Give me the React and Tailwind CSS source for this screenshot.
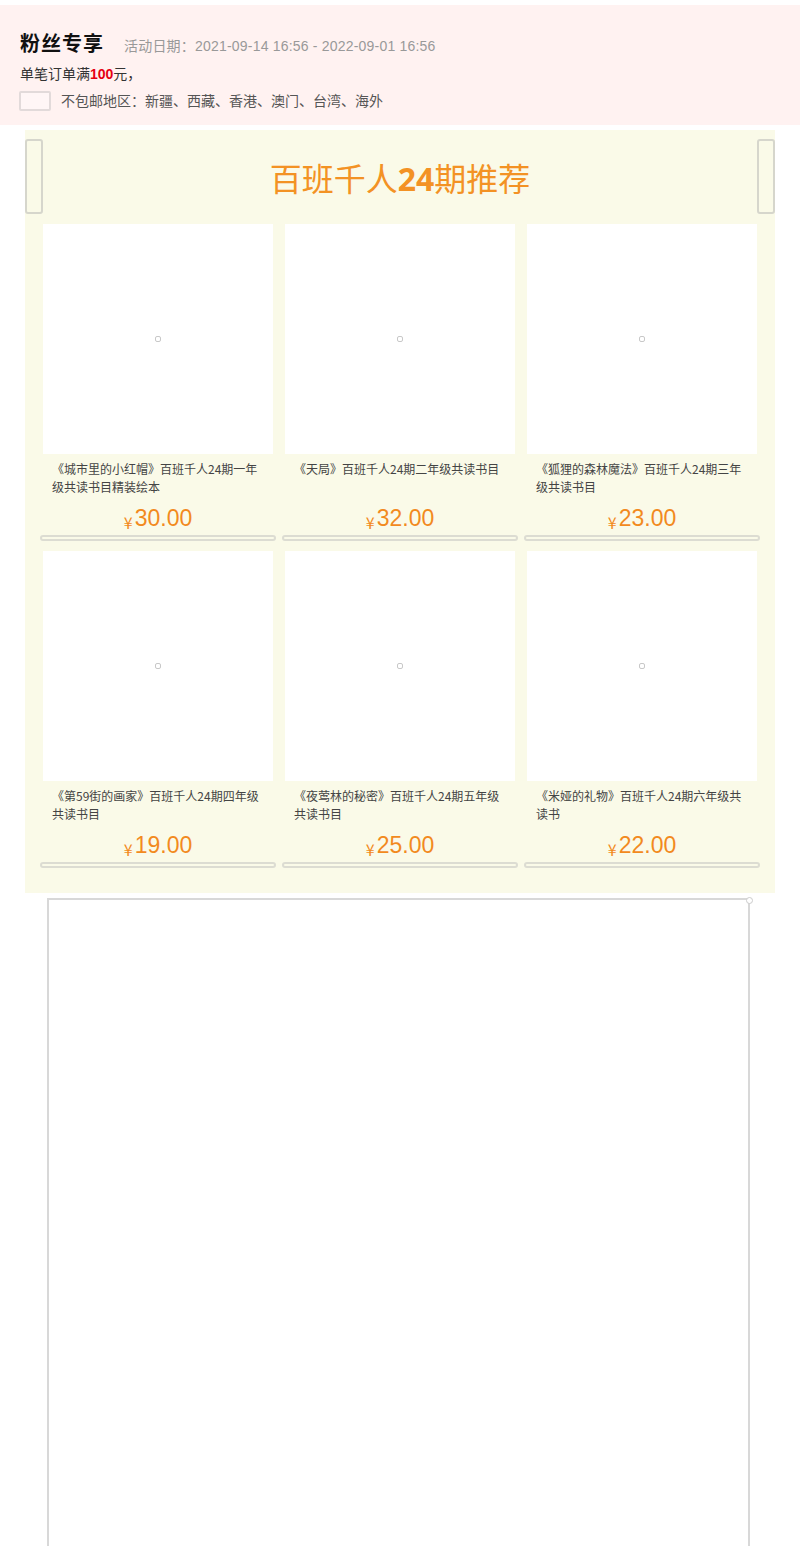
import React from "react";

const products = [
  { t: "《城市里的小红帽》百班千人24期一年级共读书目精装绘本", p: "30.00" },
  { t: "《天局》百班千人24期二年级共读书目", p: "32.00" },
  { t: "《狐狸的森林魔法》百班千人24期三年级共读书目", p: "23.00" },
  { t: "《第59街的画家》百班千人24期四年级共读书目", p: "19.00" },
  { t: "《夜莺林的秘密》百班千人24期五年级共读书目", p: "25.00" },
  { t: "《米娅的礼物》百班千人24期六年级共读书", p: "22.00" },
];

const font = { fontFamily: '"Noto Sans CJK SC", "Liberation Sans", sans-serif' };

function Card({ t, p }) {
  return (
    <div className="flex flex-col">
      <div className="w-[230px] h-[230px] bg-white flex items-center justify-center">
        <div className="w-[6px] h-[6px] rounded-[2px] border border-[#c8c8c8]" />
      </div>
      <div className="px-[9px] mt-[6px] h-[36px] text-[12px] leading-[18px] text-[#444]">{t}</div>
      <div className="h-[36px] flex items-end justify-center text-[#f28a1e] leading-none pb-[2px]">
        <span className="text-[16px] mr-[2px]">¥</span>
        <span className="text-[23px]" style={{ fontFamily: '"Liberation Sans", sans-serif' }}>{p}</span>
      </div>
      <div className="mx-[-3px] mt-[3px] h-[6px] rounded-[3px] border-2 border-[#dcdcd2]" />
    </div>
  );
}

export default function App() {
  return (
    <div className="w-[800px] bg-white pt-[5px]" style={font}>
      <div className="h-[120px] bg-[#fff2f1] pl-[20px] pt-[24px]">
        <div className="flex items-baseline">
          <span
            className="text-[20px] font-bold text-[#111] tracking-[1px]"
            style={{ fontFamily: '"Liberation Serif", "Noto Sans CJK SC", serif' }}
          >
            粉丝专享
          </span>
          <span
            className="ml-[20px] text-[14px] text-[#999] tracking-[0.2px]"
            style={{ fontFamily: '"Liberation Sans", "Noto Sans CJK SC", sans-serif' }}
          >
            活动日期：2021-09-14 16:56 - 2022-09-01 16:56
          </span>
        </div>
        <div className="mt-[4px] text-[14px] text-[#333] leading-[20px]">
          单笔订单满<span className="font-bold text-[#e60012]" style={{ fontFamily: '"Liberation Sans", sans-serif' }}>100</span>元，
        </div>
        <div className="mt-[6px] flex items-center -ml-[1px]">
          <div className="w-[32px] h-[20px] rounded-[2px] border-2 border-[#e2dada] bg-[#fff6f6]" />
          <span className="ml-[10px] text-[14px] text-[#555]">不包邮地区：新疆、西藏、香港、澳门、台湾、海外</span>
        </div>
      </div>

      <div className="mt-[5px] ml-[25px] w-[750px] bg-[#fafae8] pt-[9px] pb-[25px]">
        <div className="flex items-center justify-between h-[75px]">
          <div className="w-[18px] h-[75px] rounded-[3px] border-2 border-[#d6d6cc]" />
          <div className="text-[32px] text-[#f39224] leading-none pt-[2px]">
            百班千人<span className="font-bold" style={{ fontFamily: '"Open Sans", "Liberation Sans", sans-serif' }}>24</span>期推荐
          </div>
          <div className="w-[18px] h-[75px] rounded-[3px] border-2 border-[#d6d6cc]" />
        </div>
        <div className="mt-[10px] px-[18px] grid grid-cols-[230px_230px_230px] gap-x-[12px] gap-y-[10px]">
          {products.map((x, i) => (
            <Card key={i} {...x} />
          ))}
        </div>
      </div>

      <div className="relative mt-[5px] ml-[47px] w-[703px] h-[660px] border-2 border-[#d8d8d8] border-b-0">
        <div className="absolute -top-[3px] -right-[5px] w-[7px] h-[7px] rounded-full border border-[#ccc] bg-white" />
      </div>
    </div>
  );
}
